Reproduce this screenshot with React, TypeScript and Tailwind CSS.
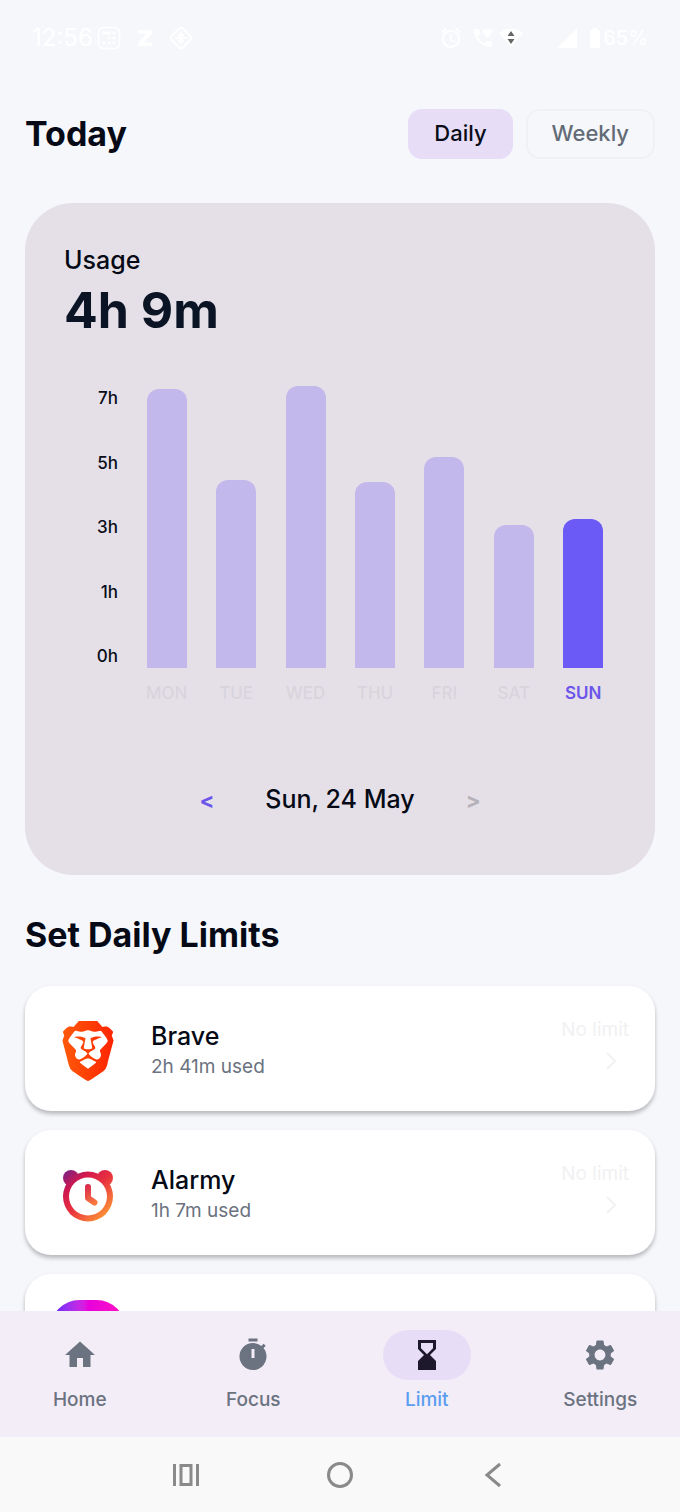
import React from "react";
import { MdAlarm, MdBatteryFull, MdHome, MdSettings, MdSignalCellular4Bar, MdWifiCalling } from "react-icons/md";
import { SiBrave } from "react-icons/si";

const DAYS = [
  { day: "MON", height: 279 },
  { day: "TUE", height: 188 },
  { day: "WED", height: 282 },
  { day: "THU", height: 186 },
  { day: "FRI", height: 211 },
  { day: "SAT", height: 143 },
  { day: "SUN", height: 149, active: true },
];

const HOURS = ["7h", "5h", "3h", "1h", "0h"];

function StatusBar() {
  return (
    <header className="flex h-[76px] shrink-0 items-center justify-between px-8 text-white">
      <div className="flex items-center gap-1">
        <span className="text-2xl">12:56</span>
        <svg viewBox="0 0 24 24" className="h-6 w-6" aria-hidden="true">
          <rect x="1.5" y="1.5" width="21" height="21" rx="5" fill="none" stroke="currentColor" strokeWidth="1.5" />
          <g fill="currentColor">
            <rect x="5.5" y="5.5" width="8" height="3" rx="1" />
            <circle cx="17" cy="7" r="1.5" />
            <circle cx="12" cy="12" r="1.5" />
            <circle cx="17" cy="12" r="1.5" />
            <circle cx="7" cy="17" r="1.5" />
            <circle cx="12" cy="17" r="1.5" />
            <circle cx="17" cy="17" r="1.5" />
          </g>
        </svg>
        <svg viewBox="0 0 16 16" className="ml-3 h-4 w-4" aria-hidden="true">
          <path d="M1 0h14v3.500L6.500 12.500H15V16H1v-3.500L9.500 3.500H1z" fill="currentColor" />
        </svg>
        <svg viewBox="0 0 24 24" className="ml-3 h-6 w-6" aria-hidden="true">
          <rect x="4" y="4" width="16" height="16" rx="3" transform="rotate(45 12 12)" fill="none" stroke="currentColor" strokeWidth="2" />
          <path d="M12 5v14M5 12h14M9 8l6 8M15 8l-6 8" stroke="currentColor" strokeWidth="1.5" />
        </svg>
      </div>
      <div className="flex items-center gap-1">
        <MdAlarm className="h-6 w-6" />
        <MdWifiCalling className="ml-1 h-6 w-6" />
        <svg viewBox="0 0 24 20" className="h-5 w-6" aria-hidden="true">
          <path d="M0 5Q12-4 24 5L12 19z" fill="currentColor" />
          <path d="M8.500 8 12 3l3.500 5zM8.500 11h7L12 16z" fill="#666" />
        </svg>
        <MdSignalCellular4Bar className="ml-7 h-6 w-6" />
        <div className="flex items-center">
          <MdBatteryFull className="-mr-1 h-6 w-6" />
          <span className="text-xl font-medium leading-6">65%</span>
        </div>
      </div>
    </header>
  );
}

function UsageCard() {
  return (
    <section className="mt-11 rounded-[48px] bg-[#e5e0e8] px-[39px] pb-[55px] pt-10">
      <h2 className="text-[25px] font-medium leading-[34px] text-[#050a16]">Usage</h2>
      <p className="text-[50px] font-bold leading-[66px] text-[#0b1424]">4h 9m</p>
      <div className="-mr-0.5 mt-[33px] flex gap-[14px]">
        <div className="flex h-[292px] w-[54px] flex-col justify-between pt-[10px] text-right text-[17px] font-medium leading-6 text-[#0a0d18]">
          {HOURS.map((h) => (
            <span key={h}>{h}</span>
          ))}
        </div>
        <div className="grid flex-1 grid-cols-7">
          {DAYS.map((d) => (
            <div key={d.day} className="flex flex-col items-center">
              <div className="flex h-[292px] items-end">
                <div
                  className={d.active ? "w-10 rounded-t-xl bg-[#6c5af6]" : "w-10 rounded-t-xl bg-[#c2b8ec]"}
                  style={{ height: d.height }}
                />
              </div>
              <span
                className={
                  d.active
                    ? "mt-[10px] text-[17px] font-semibold leading-[30px] text-[#6c55ea]"
                    : "mt-[10px] text-[17px] font-medium leading-[30px] text-[#d9d4dc]"
                }
              >
                {d.day}
              </span>
            </div>
          ))}
        </div>
      </div>
      <div className="mt-[72px] flex h-10 items-center justify-center gap-[51px]">
        <button type="button" aria-label="Previous day" className="text-[22px] font-bold text-[#6c55ea]">
          &lt;
        </button>
        <span className="text-[25px] font-medium text-[#050a16]">Sun, 24 May</span>
        <button type="button" aria-label="Next day" className="text-[22px] font-bold text-[#b5b1b9]">
          &gt;
        </button>
      </div>
    </section>
  );
}

function BraveIcon() {
  return (
    <span className="flex h-[72px] w-[72px] items-center justify-center pt-1">
      <svg width="0" height="0" className="absolute" aria-hidden="true">
        <linearGradient id="brave" x1="0" y1="0" x2="1" y2="0">
          <stop offset="0" stopColor="#ff5a0a" />
          <stop offset="1" stopColor="#ff2400" />
        </linearGradient>
      </svg>
      <SiBrave className="h-[60px] w-[60px] fill-[url(#brave)]" />
    </span>
  );
}

function AlarmyIcon() {
  return (
    <svg viewBox="0 0 72 72" className="h-[72px] w-[72px]" aria-hidden="true">
      <defs>
        <linearGradient id="alarmy" gradientUnits="userSpaceOnUse" x1="14" y1="16" x2="56" y2="62">
          <stop offset="0" stopColor="#86207c" />
          <stop offset="0.22" stopColor="#d0184f" />
          <stop offset="0.5" stopColor="#e8303f" />
          <stop offset="1" stopColor="#ffa035" />
        </linearGradient>
        <linearGradient id="alarmyHand" gradientUnits="userSpaceOnUse" x1="34" y1="28" x2="44" y2="46">
          <stop offset="0" stopColor="#d8264e" />
          <stop offset="1" stopColor="#fa7a3c" />
        </linearGradient>
      </defs>
      <g fill="url(#alarmy)">
        <circle cx="36" cy="39.5" r="25" />
        <circle cx="19" cy="21" r="8" />
        <circle cx="53" cy="21" r="8" />
      </g>
      <circle cx="36" cy="39.5" r="19" fill="#fff" />
      <path d="M36 30v11l6.500 4.500" fill="none" stroke="url(#alarmyHand)" strokeWidth="6" strokeLinecap="round" strokeLinejoin="round" />
    </svg>
  );
}

function GradientIcon() {
  return <span className="-mx-px h-[74px] w-[74px] rounded-[28px] bg-linear-to-r from-[#5a1cff] via-[#e800dc] to-[#ff0cc0]" />;
}

function LimitRow({ icon, name, used, limit }: { icon: React.ReactNode; name?: string; used?: string; limit?: string }) {
  return (
    <li>
      <button
        type="button"
        className="flex h-[125px] w-full items-center rounded-[26px] bg-white pl-[27px] pr-[26px] text-left shadow-[0_3px_4px_rgba(0,0,0,0.26)]"
      >
        {icon}
        <span className="ml-[27px] flex flex-1 flex-col pt-[5px]">
          <span className="text-[25px] font-medium leading-8 text-[#050a16]">{name}</span>
          <span className="text-[19px] leading-[30px] text-[#6b7280]">{used}</span>
        </span>
        {limit && (
          <span className="flex flex-col items-end pb-[7px] text-[19px] leading-8 text-[#f1f1f3]">
            {limit}
            <svg viewBox="0 0 36 30" className="h-[30px] w-9" aria-hidden="true">
              <path d="m14 7 8 8-8 8" fill="none" stroke="currentColor" strokeWidth="2" />
            </svg>
          </span>
        )}
      </button>
    </li>
  );
}

function TimerIcon() {
  return (
    <svg viewBox="0 0 24 24" className="h-9 w-9" fill="currentColor" aria-hidden="true">
      <path
        fillRule="evenodd"
        d="M9 1h6v2H9zM19.030 7.390l1.420-1.420c-.43-.51-.9-.99-1.410-1.410l-1.420 1.420A8.960 8.960 0 0 0 12 4a9 9 0 1 0 7.030 3.390zM13 14h-2V8h2z"
      />
    </svg>
  );
}

function HourglassIcon() {
  return (
    <svg viewBox="0 0 24 24" className="h-9 w-9" fill="currentColor" aria-hidden="true">
      <path
        fillRule="evenodd"
        d="M18 22l-.01-6L14 12l3.990-4.010L18 2H6v6l4 4-4 3.990V22h12zM8 7.500V4h8v3.500l-4 4-4-4z"
      />
    </svg>
  );
}

function NavItem({ icon, label, active }: { icon: React.ReactNode; label: string; active?: boolean }) {
  return (
    <a href="#" aria-current={active ? "page" : undefined} className="flex flex-1 flex-col items-center">
      <span
        className={
          active
            ? "flex h-[50px] w-[88px] items-center justify-center rounded-full bg-[#e7ddf7] text-[#1d182b]"
            : "flex h-[50px] w-[88px] items-center justify-center text-[#6b7280]"
        }
      >
        {icon}
      </span>
      <span
        className={
          active
            ? "mt-1.5 text-[19px] font-medium leading-7 text-[#5b9df0]"
            : "mt-1.5 text-[19px] font-medium leading-7 text-[#6b7280]"
        }
      >
        {label}
      </span>
    </a>
  );
}

export default function App() {
  return (
    <div className="flex h-screen flex-col overflow-hidden bg-[#f6f7fb] font-['Inter','Noto_Sans',sans-serif]">
      <StatusBar />
      <main className="min-h-0 flex-1 overflow-hidden px-[25px] pt-8">
        <div className="flex items-center justify-between">
          <h1 className="text-[34px] font-bold text-[#050a16]">Today</h1>
          <div className="flex gap-[13px]">
            <button type="button" className="h-[50px] rounded-[14px] bg-[#e7ddf7] px-[26px] text-[22px] font-medium text-[#0a0d18]">
              Daily
            </button>
            <button type="button" className="h-[50px] rounded-[14px] border-2 border-[#f0f1f5] px-6 text-[22px] font-medium text-[#636b77]">
              Weekly
            </button>
          </div>
        </div>
        <UsageCard />
        <h2 className="mt-9 text-[34px] font-bold leading-[48px] text-[#050a16]">Set Daily Limits</h2>
        <ul className="mt-[27px] flex flex-col gap-[19px]">
          <LimitRow icon={<BraveIcon />} name="Brave" used="2h 41m used" limit="No limit" />
          <LimitRow icon={<AlarmyIcon />} name="Alarmy" used="1h 7m used" limit="No limit" />
          <LimitRow icon={<GradientIcon />} />
        </ul>
      </main>
      <nav className="flex h-[126px] shrink-0 gap-[14px] bg-[#f3edf7] pt-[19px]">
        <NavItem icon={<MdHome className="h-9 w-9" />} label="Home" />
        <NavItem icon={<TimerIcon />} label="Focus" />
        <NavItem icon={<HourglassIcon />} label="Limit" active />
        <NavItem icon={<MdSettings className="h-9 w-9" />} label="Settings" />
      </nav>
      <footer className="flex h-[75px] shrink-0 items-center justify-center gap-[126px] bg-[#f9f9f9] text-[#8a8a8a]">
        <button type="button" aria-label="Recent apps">
          <svg viewBox="0 0 28 28" className="h-7 w-7" fill="none" stroke="currentColor" strokeWidth="3" aria-hidden="true">
            <path d="M2.500 3v22M25.500 3v22M9 4.500h10v19H9z" />
          </svg>
        </button>
        <button type="button" aria-label="Home screen">
          <svg viewBox="0 0 28 28" className="h-7 w-7" fill="none" stroke="currentColor" strokeWidth="3" aria-hidden="true">
            <circle cx="14" cy="14" r="11.5" />
          </svg>
        </button>
        <button type="button" aria-label="Back">
          <svg viewBox="0 0 28 28" className="h-7 w-7" fill="none" stroke="currentColor" strokeWidth="3" aria-hidden="true">
            <path d="M20 3 7 14l13 11" />
          </svg>
        </button>
      </footer>
    </div>
  );
}
